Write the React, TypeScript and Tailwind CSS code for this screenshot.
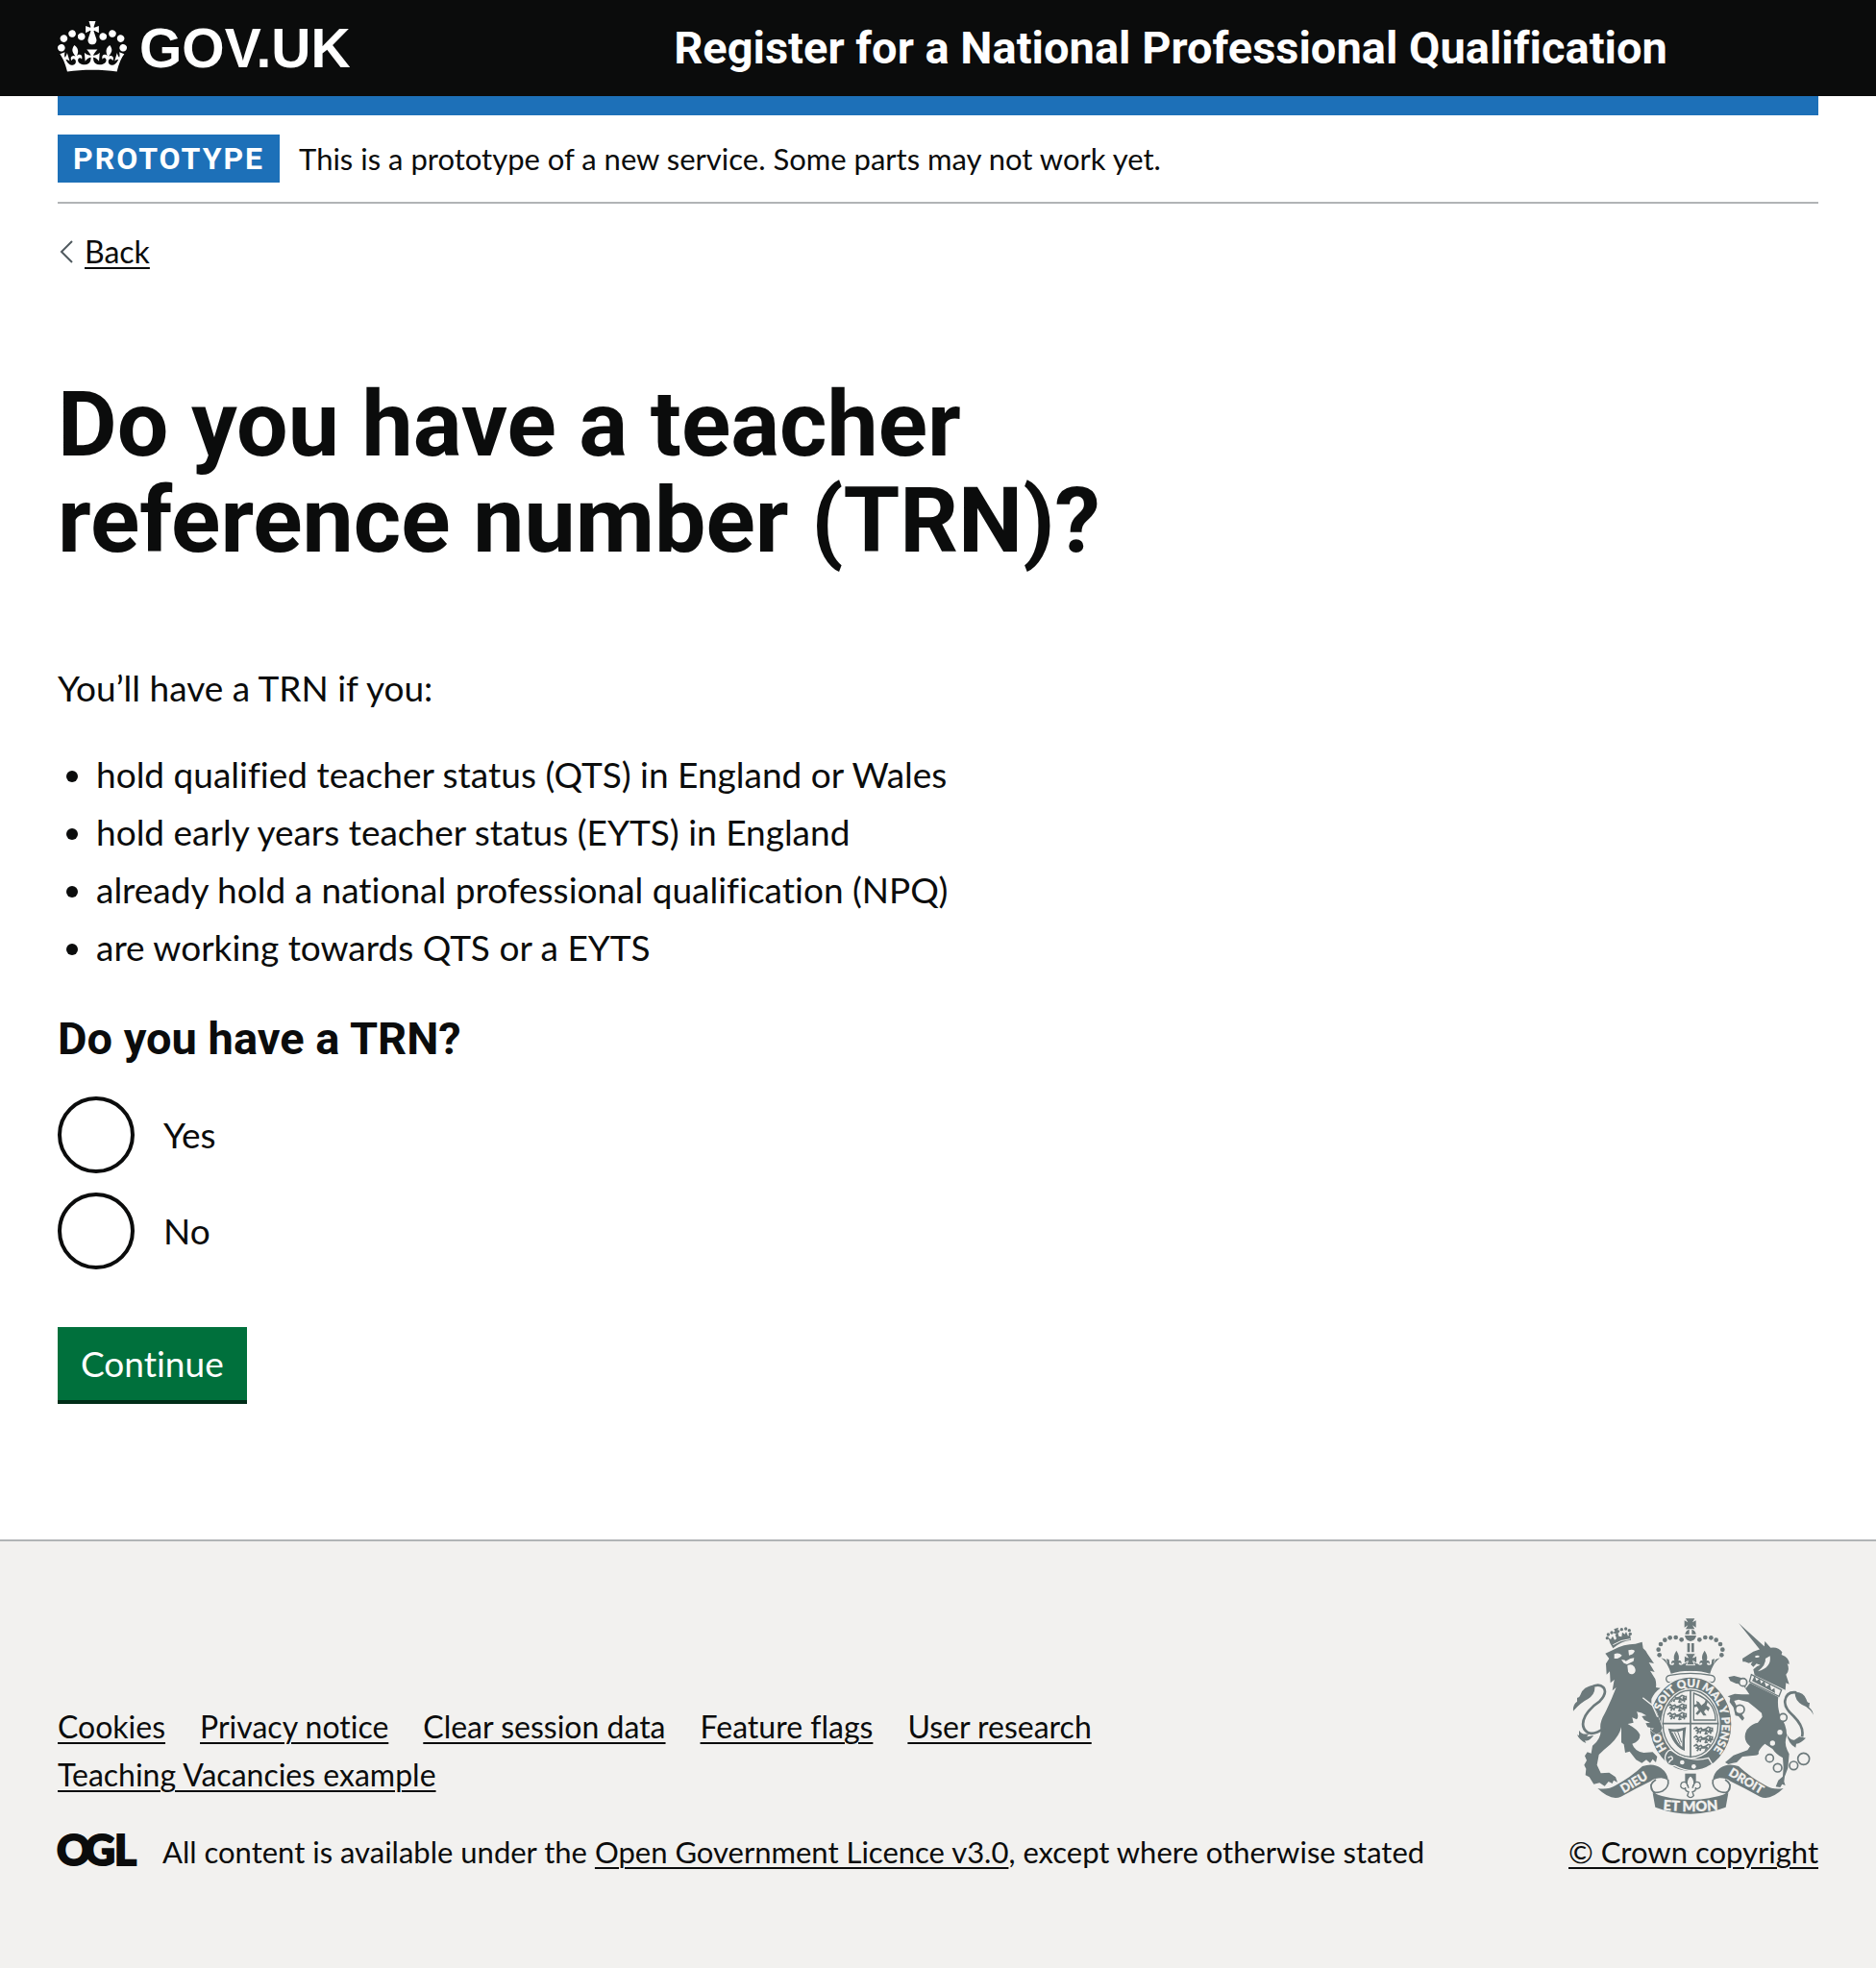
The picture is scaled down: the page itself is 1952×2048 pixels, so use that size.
import React from 'react';

const linkClass = 'underline decoration-2 underline-offset-4 hover:decoration-4';

const footerLinks = [
  'Cookies',
  'Privacy notice',
  'Clear session data',
  'Feature flags',
  'User research',
  'Teaching Vacancies example',
];

const criteria = [
  'hold qualified teacher status (QTS) in England or Wales',
  'hold early years teacher status (EYTS) in England',
  'already hold a national professional qualification (NPQ)',
  'are working towards QTS or a EYTS',
];

function Crown() {
  return (
    <svg viewBox="0 0 132 97" className="mb-1 h-[53px] w-[72px] shrink-0" fill="currentColor" aria-hidden="true">
      <path
        fillRule="evenodd"
        d="M25 30.2c3.5 1.5 7.7-.2 9.1-3.7 1.5-3.6-.2-7.8-3.9-9.2-3.6-1.4-7.6.3-9.1 3.9-1.4 3.5.3 7.5 3.9 9zM9 39.5c3.6 1.5 7.8-.2 9.2-3.7 1.5-3.6-.2-7.8-3.9-9.1-3.6-1.5-7.6.2-9.1 3.8-1.4 3.5.3 7.5 3.8 9zM4.4 57.2c3.5 1.5 7.7-.2 9.1-3.8 1.5-3.6-.2-7.7-3.9-9.1-3.5-1.5-7.6.3-9.1 3.8-1.4 3.5.3 7.6 3.9 9.1zm38.3-21.4c3.5 1.5 7.7-.2 9.1-3.8 1.5-3.6-.2-7.7-3.9-9.1-3.6-1.5-7.6.3-9.1 3.8-1.3 3.6.4 7.7 3.9 9.1zm64.4-5.6c-3.6 1.5-7.8-.2-9.1-3.7-1.5-3.6.2-7.8 3.8-9.2 3.6-1.4 7.7.3 9.2 3.9 1.3 3.5-.4 7.5-3.9 9zm15.9 9.3c-3.6 1.5-7.7-.2-9.1-3.7-1.5-3.6.2-7.8 3.7-9.1 3.6-1.5 7.7.2 9.2 3.8 1.5 3.5-.3 7.5-3.8 9zm4.7 17.7c-3.6 1.5-7.8-.2-9.2-3.8-1.5-3.6.2-7.7 3.9-9.1 3.6-1.5 7.7.3 9.2 3.8 1.3 3.5-.4 7.6-3.9 9.1zM89.3 35.8c-3.6 1.5-7.8-.2-9.2-3.8-1.4-3.6.2-7.7 3.9-9.1 3.6-1.5 7.7.3 9.2 3.8 1.4 3.6-.3 7.7-3.9 9.1zM69.7 17.7l8.9 4.7V9.3l-8.9 2.8c-.2-.3-.5-.6-.9-.9L72.4 0H59.6l3.5 11.2c-.3.3-.6.5-.9.9l-8.8-2.8v13.1l8.8-4.7c.3.3.6.7.9.9l-5 15.4v.1c-.2.8-.4 1.6-.4 2.4 0 4.1 3.1 7.5 7 8.1h.2c.3 0 .7.1 1 .1.4 0 .7 0 1-.1h.2c4-.6 7.1-4.1 7.1-8.1 0-.8-.1-1.7-.4-2.4V34l-5.1-15.4c.4-.2.7-.6 1-.9zM66 92.8c16.9 0 32.8 1.1 47.1 3.2 4-16.9 8.9-26.7 14-33.5l-9.6-3.4c1 4.9 1.1 7.2 0 10.2-1.5-1.4-3-4.3-4.2-8.7L108.6 76c2.8-2 5-3.2 7.5-3.3-4.4 9.4-10 11.9-13.6 11.2-4.3-.8-6.3-4.6-5.6-7.9 1-4.7 5.7-5.9 8-.5 4.3-8.7-3-11.4-7.6-8.8 7.1-7.2 7.9-13.5 2.1-21.1-8 6.1-8.1 12.3-4.5 20.8-4.7-5.4-12.1-2.5-9.5 6.2 3.4-5.2 7.9-2 7.2 3.1-.6 4.3-6.4 7.8-13.5 7.2-10.3-.9-10.9-8-11.2-13.8 2.5-.5 7.1 1.8 11 7.3L80.2 60c-4.1 4.4-8 5.3-12.3 5.4 1.4-4.4 8-11.6 8-11.6H55.5s6.4 7.2 7.9 11.6c-4.2-.1-8-1-12.3-5.4l1.4 16.4c3.9-5.5 8.5-7.7 10.9-7.3-.3 5.8-.9 12.8-11.1 13.8-7.2.6-12.9-2.9-13.5-7.2-.7-5 3.8-8.3 7.1-3.1 2.7-8.7-4.6-11.6-9.4-6.2 3.7-8.5 3.6-14.7-4.6-20.8-5.8 7.6-5 13.9 2.2 21.1-4.7-2.6-11.9.1-7.7 8.8 2.3-5.5 7.1-4.2 8.1.5.7 3.3-1.3 7.1-5.7 7.9-3.5.7-9-1.8-13.5-11.2 2.5.1 4.7 1.3 7.5 3.3l-4.7-15.4c-1.2 4.4-2.7 7.2-4.3 8.7-1.1-3-.9-5.3 0-10.2l-9.5 3.4c5 6.9 9.9 16.7 14 33.5 14.8-2.1 30.8-3.2 47.7-3.2z"
      />
    </svg>
  );
}

function OglLogo() {
  return (
    <svg
      viewBox="0 0 82 34"
      className="h-[34px] w-[82px] shrink-0 overflow-visible font-['Lato',sans-serif] text-[44px] font-black"
      fill="currentColor"
      stroke="currentColor"
      strokeWidth="2"
      role="img"
      aria-label="Open Government Licence"
    >
      <text x="-1" y="31">O</text>
      <text x="28" y="31">G</text>
      <text x="59" y="31">L</text>
    </svg>
  );
}

const ink = '#6c797b';
const paper = '#f2f1ef';

/* One half of the royal crown; the other half is its mirror image. */
function CrownHalf() {
  return (
    <g>
      {[
        [386, 109],
        [368, 102],
        [350, 103],
        [334, 110],
        [321, 123],
        [314, 140],
        [317, 157],
      ].map(([x, y]) => (
        <circle key={`${x}-${y}`} cx={x} cy={y} r="7" />
      ))}
      <path d="M322 166l14 5 6 14-3-16 8 2 2 14c6 6 14 4 14-2-4-3-8 0-8 3-3-8 2-14 9-11-4-10-2-20 6-32 8 12 10 22 6 32 7-3 12 3 9 11 0-3-4-6-8-3 1 6 12 8 18-2l3-16 7-3-6-10h28v55c-30-2-52 2-74 8-6-20-14-36-31-49z" />
    </g>
  );
}

function RibbonHalf() {
  return (
    <g>
      <path d="M124 573q32 6 56-9 48-26 84-60 34-12 58 6 20 14 23 40-8-8-22-9-20 0-34 10-46 22-92 48-32 14-73-26z" />
      <path
        d="M344 546q4 24-18 36-26 10-34-6-6-18 14-30M290 560q2 26 20 36"
        fill="none"
        stroke={ink}
        strokeWidth="5"
      />
    </g>
  );
}

/* Three passant lions stacked in one quarter of the shield. */
function ThreeLions() {
  return (
    <g fill="none" stroke={ink} strokeWidth="5" strokeLinejoin="round">
      {[0, 27, 54].map((dy) => (
        <path
          key={dy}
          d={`M2 ${dy + 8}l8-6 6 7 9-4 4 6 10-3 8-6 8 3-4 6 8 2M8 ${dy + 12}l10 3-6 8M24 ${dy + 13}l10 0 8-2 6 6 10-3M24 ${dy + 13}l-2 9M42 ${dy + 13}l-4 10 8-1M56 ${dy + 14}l-2 9M60 ${dy + 3}v14`}
        />
      ))}
    </g>
  );
}

function RoyalArms() {
  return (
    <svg viewBox="48 42 750 612" className="h-[204px] w-[250px] overflow-visible" fill={ink} aria-hidden="true">
      {/* Lion's coronet */}
      <g>
        <path d="M163 120l-6-18 8 6 6-10 6 12 6-4-4-12 8-8 3 12 9 2 2-14 8 6 4-8 6 14 6-8 3 20q-32 4-56 26z" />
        <path d="M175 76l14-5-2 8 7 1-4 8-10 3-9-4 7-4z" />
        {[
          [154, 104],
          [157, 93],
          [168, 87],
          [199, 77],
          [212, 75],
          [223, 80],
          [226, 91],
        ].map(([x, y]) => (
          <circle key={`${x}-${y}`} cx={x} cy={y} r="5" />
        ))}
        <path d="M172 125q24-16 54-18" fill="none" stroke={paper} strokeWidth="3" />
      </g>

      {/* Unicorn */}
      <path d="M564 57l90 82-18 8zM577 178l-1-10 34-22 34-12 2-20 18 20q24-4 36 14l-2 8q26 10 24 30l-6-2q10 20-4 34l10 30-10-4-2 22-96-46-4-18 12-10 10-4-12-4-10 10-8-8 6-8-12 4-12-4z" />
      <path d="M662 160q6 36-38 48 26-20 24-40zM616 160q10-4 14 2-6 4-14 2z" fill={paper} />
      <path d="M586 262l14-18 88 44q-4 30 6 58 22 34 20 64-8 22 2 44l6 12-4 44-10 26-2 16 4 12-10-4-6 10-14-2 8-20 14-12 2-30-2-28q-20-10-32-28l-24-16q-16 14-20 26 4 8-10 10l-40 4-18 18-12 2-14 4-10-6 10-8 16-14 44-16 8-12q-26-22-10-52 16-20 34-22l14-18-2-12-24-20-18-14-30-8-14 4 14 28 12 16 6 10-6 8-12-14-10-2-6-26-12-16 2-14-8-4 22-8 22 2 24 0-22-32-20-2-18-8-6-12 18-4 22 6 14 22z" />
      <path d="M604 218l94 48-8 20-92-46z" fill={paper} stroke={ink} strokeWidth="4" />
      <path d="M606 238l8-16 6 16 10-8 4 16 10-8 6 18 12-8 4 18 10-6 2 16z" />
      {[
        [578, 242, 12],
        [568, 327, 14],
        [703, 352, 12],
        [661, 479, 12],
        [686, 509, 13],
        [736, 502, 13],
        [767, 481, 18],
      ].map(([x, y, r]) => (
        <circle key={x} cx={x} cy={y} r={r} fill={paper} stroke={ink} strokeWidth="5" />
      ))}
      <g fill={paper}>
        <circle cx="560" cy="268" r="7" />
        <circle cx="693" cy="398" r="8" />
        <circle cx="670" cy="432" r="8" />
      </g>
      <path d="M762 412q8-30-26-64-30-26-27-48 4-30 36-26" fill="none" stroke={ink} strokeWidth="8" />
      <path d="M798 344q-4-18-14-24l2-14q-8 0-10-10-8-24-36-24-2 24 22 40 24 8 36 32zM714 402q10 22 24 20l16-10 20 4q-16 16-30 18l-2 12q-22-10-28-44z" />

      {/* Royal crown */}
      <path d="M399 43h28l-7 12 11-6v22l-11-7 7 12h-28l7-12-11 7V49l11 6zM397 92q2-12 13-15v15zM418 77q12 3 13 15h-13zM396 96h36q-3 16-18 18-15-2-18-18zM404 120h8v28h-8zM417 120h8v28h-8z" />
      <CrownHalf />
      <g transform="translate(828) scale(-1 1)">
        <CrownHalf />
      </g>
      <path d="M398 152h32l-8 13 12-6v24l-12-7q2 8 6 12h-28q5-5 6-12l-12 7v-24l12 6z" stroke={paper} strokeWidth="3" />
      <path
        d="M350 220q64-12 128 0 12 2 12 12-2 12-14 10-62-26-124 0-12 2-14-10 0-10 12-12z"
        fill={paper}
        stroke={ink}
        strokeWidth="4"
      />

      {/* Garter and shield */}
      <ellipse cx="414" cy="373" rx="129" ry="148" stroke={paper} strokeWidth="4" />
      <ellipse cx="414" cy="371" rx="92" ry="110" fill={paper} />
      <ellipse cx="414" cy="371" rx="86" ry="104" fill="none" stroke={ink} strokeWidth="4" />
      <path d="M414 266v212M326 371h176" stroke={ink} strokeWidth="5" />
      <clipPath id="shield">
        <ellipse cx="414" cy="371" rx="84" ry="102" />
      </clipPath>
      <g clipPath="url(#shield)">
        <g transform="translate(340 281)">
          <ThreeLions />
        </g>
        <g transform="translate(422 380)">
          <ThreeLions />
        </g>
      </g>
      <path d="M424 276v84h68q0-60-68-84z" fill="none" stroke={ink} strokeWidth="4" />
      <path d="M432 300l8 4 8 10 10-8 4-10 6 6-4 12 10 8-4 10-8-6-6 8 8 12-10 0-8-12-10 10-6-4 10-12-6-10-10 2 2-8 8-2z" />
      <path d="M344 386q30 6 56-4-6 40-4 74-36-14-52-70zM354 396q16 34 34 48l2-52q-16 6-36 4z" fillRule="evenodd" />
      <path d="M364 398l18 38M374 396l12 34M356 398l22 42" stroke={ink} strokeWidth="3" />
      <g fill={paper} stroke={paper} className="font-['Lato',sans-serif] text-[35px] font-black">
        <path id="garter" d="M414 489A98 116 0 0 1 414 257A98 116 0 0 1 414 489" fill="none" stroke="none" />
        <text>
          <textPath href="#garter" startOffset="86">HO</textPath>
        </text>
        <text>
          <textPath href="#garter" startOffset="210">SOIT QUI MAL Y PENSE</textPath>
        </text>
      </g>
      <path d="M340 462q8-14 20-4l14 10q50 24 96 10l12 20q-54 38-118 4-20 4-26-12-8-14 2-28z" stroke={paper} strokeWidth="4" />
      <path d="M344 478q14-10 14 4-8 4-12 12" fill="none" stroke={paper} strokeWidth="4" />
      <g fill={paper}>
        <circle cx="388" cy="492" r="7" />
        <circle cx="424" cy="505" r="7" />
      </g>

      {/* Lion */}
      <path
        d="M148 152L172 141Q206 122 242 122L263 116 266 136Q276 144 280 154L300 183 284 180 302 210 288 206 304 232Q308 245 306 258L320 260Q302 272 292 294L292 310Q310 335 318 362L326 384 320 398 306 404 290 392 300 386 280 382 274 370 288 368 270 360 262 348 276 346Q262 336 246 334 254 348 246 358L232 352 236 368 218 372Q250 390 256 405 258 425 232 434 240 458 268 462L296 460 310 474 306 492 296 482 288 494 276 484 262 494 244 484 224 458 210 462 206 436 198 430 198 382Q192 410 164 436 142 454 128 468L122 500 134 526 160 524 180 538 186 554 174 548 170 558 158 552 146 566 130 556 112 560 98 538 86 532 88 512 82 500 90 486 84 472 92 460 104 464 108 440Q134 420 134 392 128 370 146 340 166 300 182 258L170 268 176 234 164 244 162 208 152 218 150 184 160 168Z"
        stroke={paper}
        strokeWidth="3"
        paintOrder="stroke"
      />
      <path d="M176 154q14-6 24 4-10 12-24 10zM220 142q14-4 20 2-4 12-18 14zM198 172q12-2 14 4l14-8 12-2-2 10-20 10-10-4z" fill={paper} />
      <path d="M217 190q12-8 22 4 8 14-4 22-12 4-16-8z" fill={paper} />
      <path d="M265 290l30 24 16 36" fill="none" stroke={paper} strokeWidth="4" />
      <path d="M146 384q-36 26-54 14-24-18-6-52 16-26 44-44 26-28 12-44-14-14-40 0" fill="none" stroke={ink} strokeWidth="8" />
      <path d="M48 332q-2-20 12-30l0-12q6 2 10-8 8-28 44-30 6 24-20 42-24 12-46 38zM66 392q10 16 32 10l-8 10 22-4q-16 20-28 16l4 8q-20-8-28-26l6 2z" />

      {/* Ribbon and motto */}
      <RibbonHalf />
      <g transform="translate(828) scale(-1 1)">
        <RibbonHalf />
      </g>
      <path d="M296 588q118 42 236 0l-8 44q-110 42-220 0z" />
      <path d="M397 527h34v30h-34z" />
      <path
        d="M414 532q20 20 6 40 6-26 22-16 8 14-6 18-6 2-6-4 2 12-10 14l4 12q-10 12-20 0l4-12q-12-2-10-14 0 6-6 4-14-4-6-18 16-10 22 16-14-20 6-40z"
        fill={paper}
        stroke={ink}
        strokeWidth="4"
      />
      <g fill={paper} stroke={paper} textAnchor="middle" className="font-['Lato',sans-serif] font-black">
        <text x="238" y="567" transform="rotate(-31 238 555)" className="text-[38px]">
          DIEU
        </text>
        <text x="588" y="563" transform="rotate(31 588 551)" className="text-[38px]">
          DROIT
        </text>
        <path id="motto" d="M304 638q110 14 220 0" fill="none" stroke="none" />
        <text className="text-[44px]">
          <textPath href="#motto" startOffset="50%">
            ET MON
          </textPath>
        </text>
      </g>
    </svg>
  );
}

function Radio({ id, label }: { id: string; label: string }) {
  return (
    <div className="flex items-center gap-[30px]">
      <input
        type="radio"
        id={id}
        name="has-trn"
        value={label}
        className="size-20 shrink-0 appearance-none rounded-full border-4 border-[#0b0c0c] bg-white checked:bg-[radial-gradient(#0b0c0c_20px,transparent_21px)]"
      />
      <label htmlFor={id}>{label}</label>
    </div>
  );
}

export default function App() {
  return (
    <div className="flex min-h-screen flex-col bg-white font-['Lato',sans-serif] text-[37px] leading-[50px] text-[#0b0c0c] [font-variant-ligatures:none]">
      <header className="bg-[#0b0c0c] px-[60px] text-white">
        <div className="flex h-[100px] items-center">
          <a href="#" className="flex w-[35%] items-center gap-[13px]" aria-label="GOV.UK">
            <Crown />
            <span className="font-['Liberation_Sans',sans-serif] text-[57px] leading-[60px] font-bold">GOV.UK</span>
          </a>
          <a href="#" className="font-['Roboto',sans-serif] text-[47px] leading-[60px] font-bold whitespace-nowrap">
            Register for a National Professional Qualification
          </a>
        </div>
      </header>

      <div className="px-[60px]">
        <div className="h-5 bg-[#1d70b8]" />
        <div className="flex items-center gap-5 border-b-2 border-[#b1b4b6] py-5 text-[31px]">
          <strong className="bg-[#1d70b8] px-4 font-['Roboto',sans-serif] text-[32px] font-bold tracking-[2px] text-white">
            PROTOTYPE
          </strong>
          <span>This is a prototype of a new service. Some parts may not work yet.</span>
        </div>

        <a href="#" className="mt-[25px] inline-flex items-center gap-3 text-[32px]">
          <svg viewBox="0 0 16 24" className="h-6 w-4" fill="none" stroke="#505a5f" strokeWidth="2" aria-hidden="true">
            <path d="M15 1L4 12l11 11" />
          </svg>
          <span className={linkClass}>Back</span>
        </a>
      </div>

      <main className="grow px-[60px] pt-[105px] pb-[140px]">
        <div className="w-2/3">
          <h1 className="font-['Roboto',sans-serif] text-[95px] leading-[100px] font-bold">
            Do you have a teacher reference number (TRN)?
          </h1>
          <p className="mt-[99px]">You’ll have a TRN if you:</p>
          <ul className="mt-10 flex list-disc flex-col gap-[10px] pl-10">
            {criteria.map((item) => (
              <li key={item}>{item}</li>
            ))}
          </ul>
          <form onSubmit={(event) => event.preventDefault()}>
            <fieldset className="mt-10">
              <legend className="font-['Roboto',sans-serif] text-[47px] leading-[60px] font-bold">
                Do you have a TRN?
              </legend>
              <div className="mt-[30px] flex flex-col gap-5">
                <Radio id="trn-yes" label="Yes" />
                <Radio id="trn-no" label="No" />
              </div>
            </fieldset>
            <button
              type="submit"
              className="mt-[60px] block h-20 border-b-4 border-[#002d18] bg-[#00703c] px-6 text-white"
            >
              Continue
            </button>
          </form>
        </div>
      </main>

      <footer className="border-t-2 border-[#b1b4b6] bg-[#f2f1ef] px-[60px] pt-20 pb-24 text-[31px]">
        <div className="flex items-end justify-between gap-10">
          <div>
            <ul className="flex max-w-[1300px] flex-wrap gap-x-9 text-[32px]">
              {footerLinks.map((text) => (
                <li key={text}>
                  <a href="#" className={linkClass}>
                    {text}
                  </a>
                </li>
              ))}
            </ul>
            <div className="mt-[30px] flex items-center gap-[27px]">
              <OglLogo />
              <span>
                All content is available under the{' '}
                <a href="#" className={linkClass}>
                  Open Government Licence v3.0
                </a>
                , except where otherwise stated
              </span>
            </div>
          </div>
          <a href="#" className={`flex flex-col items-center gap-[14px] whitespace-nowrap ${linkClass}`}>
            <RoyalArms />
            <span>© Crown copyright</span>
          </a>
        </div>
      </footer>
    </div>
  );
}
